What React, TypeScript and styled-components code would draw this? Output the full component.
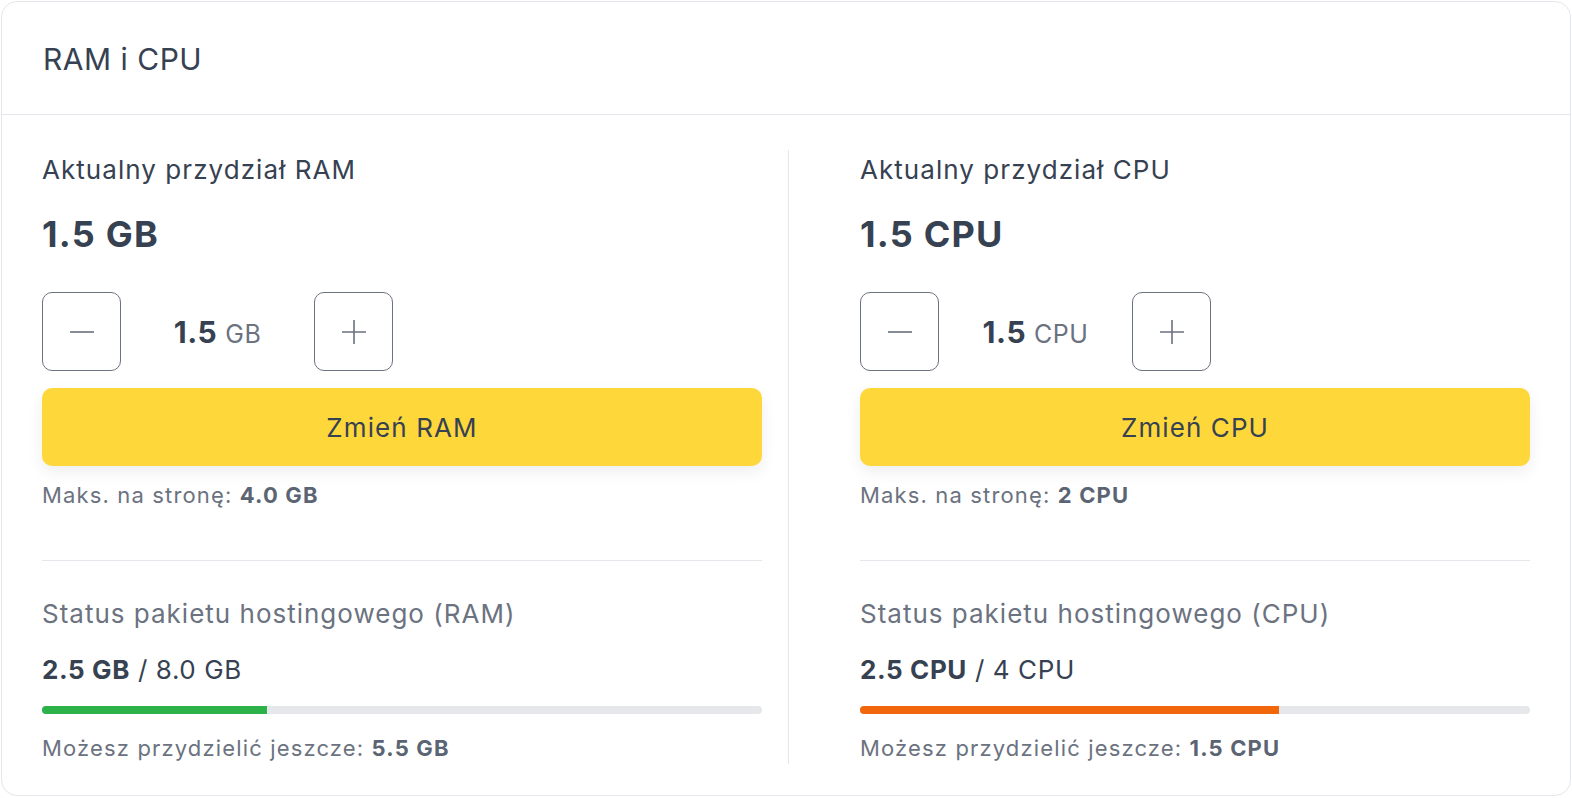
import React from 'react';
import styled, { createGlobalStyle } from 'styled-components';

const GlobalStyle = createGlobalStyle`
  html, body {
    margin: 0;
    padding: 0;
    background: #ffffff;
  }
  body {
    padding: 1px;
    font-family: Inter, "Noto Sans", "Liberation Sans", sans-serif;
    color: #364152;
  }
  * {
    box-sizing: border-box;
  }
`;

const Card = styled.div`
  background: #ffffff;
  border: 1px solid #e4e7eb;
  border-radius: 16px;
  height: 795px;
  display: flex;
  flex-direction: column;
`;

const Header = styled.div`
  padding: 37px 40px 35px 41px;
  border-bottom: 1px solid #e4e7eb;
`;

const Title = styled.h2`
  margin: 0;
  font-size: 30px;
  line-height: 40px;
  font-weight: 400;
  letter-spacing: 0.5px;
  color: #364152;
`;

const Body = styled.div`
  display: grid;
  grid-template-columns: 746px 1fr;
  padding: 35px 40px 0 40px;
`;

const Column = styled.div<{ $right?: boolean }>`
  display: flex;
  flex-direction: column;
  height: 614px;
  padding-right: ${(p) => (p.$right ? '0' : '26px')};
  padding-left: ${(p) => (p.$right ? '71px' : '0')};
  border-left: ${(p) => (p.$right ? '1px solid #e4e7eb' : 'none')};
`;

const Label = styled.div`
  font-size: 26px;
  line-height: 40px;
  letter-spacing: 1.05px;
  color: #364152;
`;

const BigValue = styled.div`
  margin-top: 24px;
  font-size: 36px;
  line-height: 40px;
  font-weight: 700;
  letter-spacing: 1.2px;
  color: #364152;
`;

const Stepper = styled.div`
  margin-top: 38px;
  display: flex;
  align-items: center;
`;

const StepButton = styled.button`
  width: 79px;
  height: 79px;
  border: 1.5px solid #6b7280;
  border-radius: 10px;
  background: #ffffff;
  display: flex;
  align-items: center;
  justify-content: center;
  padding: 0;
  cursor: pointer;
`;

const StepValue = styled.div`
  width: 193px;
  text-align: center;
  font-size: 30px;
  font-weight: 700;
  letter-spacing: 0.6px;
  color: #364152;

  span {
    font-size: 25px;
    font-weight: 400;
    color: #6b7280;
  }
`;

const ChangeButton = styled.button`
  margin-top: 17px;
  height: 78px;
  width: 100%;
  border: none;
  border-radius: 10px;
  background: #fed73b;
  color: #364152;
  font-family: inherit;
  font-size: 26px;
  letter-spacing: 1.1px;
  box-shadow: 0 6px 16px rgba(0, 0, 0, 0.07);
  cursor: pointer;
`;

const Note = styled.div<{ $gap: number }>`
  margin-top: ${(p) => p.$gap}px;
  font-size: 22px;
  line-height: 28px;
  letter-spacing: 1.15px;
  color: #6b7280;

  b {
    font-weight: 700;
    color: #5b6472;
  }
`;

const Rule = styled.hr`
  margin: 51px 0 0;
  border: none;
  border-top: 1px solid #e4e7eb;
`;

const StatusLabel = styled.div`
  margin-top: 37px;
  font-size: 26px;
  line-height: 32px;
  letter-spacing: 1px;
  color: #6b7280;
`;

const Usage = styled.div`
  margin-top: 24px;
  font-size: 26px;
  line-height: 32px;
  letter-spacing: 0.6px;
  color: #364152;

  b {
    font-weight: 700;
  }
`;

const Track = styled.div`
  margin-top: 20px;
  height: 8px;
  border-radius: 4px;
  background: #e5e7eb;
  overflow: hidden;
`;

const Fill = styled.div<{ $color: string }>`
  height: 100%;
  background: ${(p) => p.$color};
`;

const Minus = () => (
  <svg width="26" height="26" viewBox="0 0 26 26">
    <path d="M1 13h24" stroke="#6b7280" strokeWidth="1.6" />
  </svg>
);

const Plus = () => (
  <svg width="26" height="26" viewBox="0 0 26 26">
    <path d="M1 13h24M13 1v24" stroke="#6b7280" strokeWidth="1.6" />
  </svg>
);

type Resource = {
  key: string;
  unit: string;
  current: string;
  max: string;
  used: string;
  total: string;
  left: string;
  ratio: number;
  color: string;
};

const resources: Resource[] = [
  { key: 'RAM', unit: 'GB', current: '1.5', max: '4.0 GB', used: '2.5 GB', total: '8.0 GB', left: '5.5 GB', ratio: 2.5 / 8, color: '#2db24a' },
  { key: 'CPU', unit: 'CPU', current: '1.5', max: '2 CPU', used: '2.5 CPU', total: '4 CPU', left: '1.5 CPU', ratio: 2.5 / 4, color: '#f2670c' },
];

const ResourceColumn: React.FC<{ r: Resource; right?: boolean }> = ({ r, right }) => (
  <Column $right={right}>
    <Label>Aktualny przydział {r.key}</Label>
    <BigValue>
      {r.current} {r.unit}
    </BigValue>
    <Stepper>
      <StepButton aria-label="Zmniejsz">
        <Minus />
      </StepButton>
      <StepValue>
        {r.current} <span>{r.unit}</span>
      </StepValue>
      <StepButton aria-label="Zwiększ">
        <Plus />
      </StepButton>
    </Stepper>
    <ChangeButton>Zmień {r.key}</ChangeButton>
    <Note $gap={15}>
      Maks. na stronę: <b>{r.max}</b>
    </Note>
    <Rule />
    <StatusLabel>Status pakietu hostingowego ({r.key})</StatusLabel>
    <Usage>
      <b>{r.used}</b> / {r.total}
    </Usage>
    <Track>
      <Fill $color={r.color} style={{ width: `${r.ratio * 100}%` }} />
    </Track>
    <Note $gap={20}>
      Możesz przydzielić jeszcze: <b>{r.left}</b>
    </Note>
  </Column>
);

const App: React.FC = () => (
  <>
    <GlobalStyle />
    <Card>
      <Header>
        <Title>RAM i CPU</Title>
      </Header>
      <Body>
        <ResourceColumn r={resources[0]} />
        <ResourceColumn r={resources[1]} right />
      </Body>
    </Card>
  </>
);

export default App;
